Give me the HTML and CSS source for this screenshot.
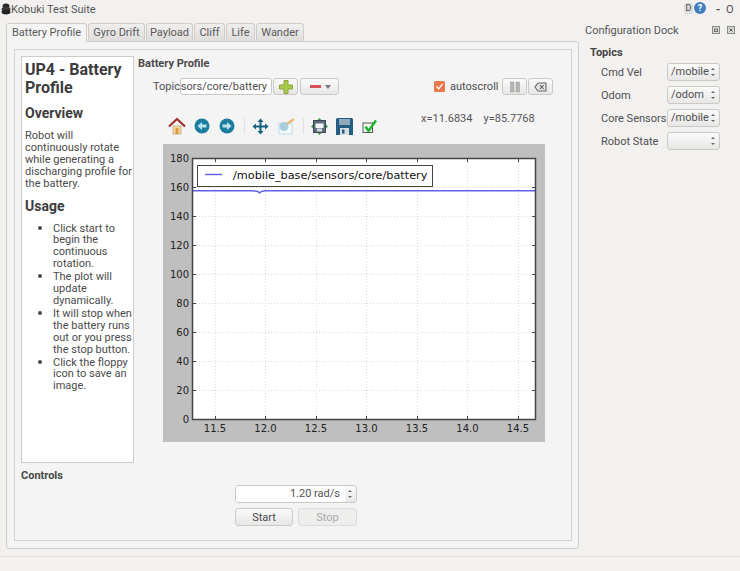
FILE: index.html
```html
<!DOCTYPE html>
<html lang="en">
<head>
    <meta charset="UTF-8">
    <title>Kobuki Test Suite</title>
    <link rel="stylesheet" href="styles.css">
</head>
<body>
<div class="window">
    <div class="titlebar">
        <svg class="app-icon" width="10" height="12" viewBox="0 0 10 12">
            <ellipse cx="5" cy="3" rx="3.5" ry="2.5" fill="#2b2b2b"/>
            <ellipse cx="5" cy="6" rx="4.5" ry="2" fill="#3a3a3a"/>
            <ellipse cx="5" cy="9" rx="4.5" ry="2.4" fill="#222"/>
        </svg>
        <span class="app-title">Kobuki Test Suite</span>
        <span class="title-d">D</span>
        <span class="title-help">?</span>
        <span class="title-min">-</span>
        <span class="title-o">O</span>
    </div>

    <div class="content">
        <div class="main">
            <div class="tabs">
                <div class="tab active">Battery Profile</div>
                <div class="tab tab-gyro">Gyro Drift</div>
                <div class="tab tab-payload">Payload</div>
                <div class="tab tab-cliff">Cliff</div>
                <div class="tab tab-life">Life</div>
                <div class="tab tab-wander">Wander</div>
            </div>
            <div class="pane">
                <div class="group">
                    <div class="upper">
                        <div class="doc">
                            <h1>UP4 - Battery Profile</h1>
                            <h2>Overview</h2>
                            <p>Robot will continuously rotate while generating a discharging profile for the battery.</p>
                            <h2 class="usage">Usage</h2>
                            <ul>
                                <li>Click start to begin the continuous rotation.</li>
                                <li>The plot will update dynamically.</li>
                                <li>It will stop when the battery runs out or you press the stop button.</li>
                                <li>Click the floppy icon to save an image.</li>
                            </ul>
                        </div>

                        <div class="profile">
                            <div class="section-title">Battery Profile</div>
                            <div class="topic-row">
                                <span class="topic-label">Topic</span>
                                <div class="topic-input"><span>/mobile_base/sensors/core/battery</span></div>
                                <div class="btn btn-add">
                                    <svg width="16" height="16" viewBox="0 0 16 16">
                                        <path d="M6 1.5h4v4.500h4.500v4H10v4.500H6V10H1.500V6H6z" fill="#a9c94e" stroke="#8aa63a"/>
                                    </svg>
                                </div>
                                <div class="btn btn-remove">
                                    <span class="minus"></span>
                                    <span class="caret"></span>
                                </div>
                                <div class="auto-box">
                                    <svg width="11" height="11" viewBox="0 0 11 11">
                                        <rect width="11" height="11" rx="1.500" fill="#e8774a"/>
                                        <path d="M2.500 5.500l2.200 2.300 4-5" fill="none" stroke="#fff" stroke-width="1.300"/>
                                    </svg>
                                    <span>autoscroll</span>
                                </div>
                                <div class="btn btn-small">
                                    <svg width="12" height="12" viewBox="0 0 12 12">
                                        <rect x="1.500" y="1" width="3.500" height="10" fill="#b5b5b3" stroke="#9a9a98" stroke-width=".5"/>
                                        <rect x="7" y="1" width="3.500" height="10" fill="#b5b5b3" stroke="#9a9a98" stroke-width=".5"/>
                                    </svg>
                                </div>
                                <div class="btn btn-small">
                                    <svg width="13" height="10" viewBox="0 0 13 10">
                                        <path d="M4 1h8v8H4L1 5z" fill="#e4e4e2" stroke="#666" stroke-width="1.100"/>
                                        <path d="M6 3.200l3.600 3.600M9.600 3.200L6 6.800" stroke="#666" stroke-width="1.100"/>
                                    </svg>
                                </div>
                            </div>

                            <div class="toolbar">
                                <svg class="tool" width="18" height="18" viewBox="0 0 18 18">
                                    <path d="M5 9h8v8H5z" fill="#f3d9a8" stroke="#b99b6a" stroke-width=".7"/>
                                    <path d="M7.500 11h3v6h-3z" fill="#e39a35"/>
                                    <path d="M1 9.500L9 2l8 7.500" fill="none" stroke="#a0302e" stroke-width="2.200"/>
                                </svg>
                                <svg class="tool tool-back" width="16" height="16" viewBox="0 0 16 16">
                                    <circle cx="8" cy="8" r="7.500" fill="#1c7e9e"/>
                                    <path d="M3.500 8L8 4v2.500h4.500v3H8V12z" fill="#bfe3ee"/>
                                </svg>
                                <svg class="tool tool-next" width="16" height="16" viewBox="0 0 16 16">
                                    <circle cx="8" cy="8" r="7.500" fill="#1c7e9e"/>
                                    <path d="M12.500 8L8 4v2.500H3.500v3H8V12z" fill="#bfe3ee"/>
                                </svg>
                                <span class="tool-sep"></span>
                                <svg class="tool" width="17" height="17" viewBox="0 0 17 17">
                                    <path d="M8.500 0.500l3 3.500H9.500v3.500H13v-2l3.500 3-3.500 3v-2H9.500V13h2l-3 3.500-3-3.500h2V9.500H4v2L.5 8.500 4 5.500v2h3.500V4h-2z" fill="#14607f"/>
                                </svg>
                                <svg class="tool tool-zoom" width="18" height="17" viewBox="0 0 18 17">
                                    <rect x="2" y="5" width="13" height="11" fill="#f4fafc" stroke="#bfdbe6"/>
                                    <circle cx="7" cy="8.500" r="4.500" fill="#a9cedb"/>
                                    <path d="M10 6l7-5" stroke="#eab777" stroke-width="2.500"/>
                                </svg>
                                <span class="tool-sep tool-sep2"></span>
                                <svg class="tool" width="17" height="17" viewBox="0 0 17 17">
                                    <rect x="2.500" y="2.500" width="12" height="12" fill="#5d6d7d" stroke="#3d4853"/>
                                    <rect x="4.500" y="5.500" width="8" height="4.500" fill="#f6f6f6"/>
                                    <rect x="6" y="10.500" width="5" height="3" fill="#d5dade"/>
                                    <path d="M8.500 0l2 2h-4zM8.500 17l2-2h-4zM0 8.500l2 2v-4zM17 8.500l-2 2v-4z" fill="#35a645"/>
                                </svg>
                                <svg class="tool tool-save" width="17" height="17" viewBox="0 0 17 17">
                                    <path d="M0 1.500A1.500 1.500 0 0 1 1.500 0H15.500A1.500 1.500 0 0 1 17 1.500V17H0z" fill="#235d82"/>
                                    <rect x="3" y="1" width="11" height="6" fill="#8fa9bb"/>
                                    <rect x="4" y="10" width="9" height="7" fill="#d7dee3"/>
                                    <rect x="6" y="11.500" width="2.500" height="4" fill="#235d82"/>
                                </svg>
                                <svg class="tool tool-check" width="15" height="15" viewBox="0 0 15 15">
                                    <rect x="1" y="4" width="9.500" height="9.500" fill="#f4f4f4" stroke="#555"/>
                                    <path d="M3.500 7.500l3 4.500L14 1.500" fill="none" stroke="#18b52a" stroke-width="2.400"/>
                                </svg>
                                <span class="coords coord-x">x=11.6834</span>
                                <span class="coords coord-y">y=85.7768</span>
                            </div>

                            <svg class="plot" width="382" height="298" viewBox="0 0 382 298">
                                <rect width="382" height="298" fill="#bfbfbf"/>
                                <rect x="29.500" y="14.500" width="343" height="261" fill="#fff"/>
                                <path d="M52.500 15V275M102.500 15V275M153.500 15V275M203.500 15V275M254.500 15V275M304.500 15V275M355.500 15V275M30 246.500H372M30 217.500H372M30 188.500H372M30 159.500H372M30 130.500H372M30 101.500H372M30 72.500H372M30 43.500H372" stroke="#dadada" stroke-width="1" stroke-dasharray="1 2" fill="none"/>
                                <path d="M30 46.700H90L95 47.500L96.500 49L98.500 47.500L102 46.700H372" fill="none" stroke="#6060e4" stroke-width="1.400"/>
                                <rect x="29.500" y="14.500" width="343" height="261" fill="none" stroke="#444" stroke-width="1.500"/>
                                <path d="M52.500 272V275M102.500 272V275M153.500 272V275M203.500 272V275M254.500 272V275M304.500 272V275M355.500 272V275M52.500 15V18M102.500 15V18M153.500 15V18M203.500 15V18M254.500 15V18M304.500 15V18M355.500 15V18M30 246.500H33M30 217.500H33M30 188.500H33M30 159.500H33M30 130.500H33M30 101.500H33M30 72.500H33M30 43.500H33M369 246.500H372M369 217.500H372M369 188.500H372M369 159.500H372M369 130.500H372M369 101.500H372M369 72.500H372M369 43.500H372" stroke="#444" fill="none"/>
                                <g class="tick-y">
                                    <text x="26" y="18">180</text>
                                    <text x="26" y="47">160</text>
                                    <text x="26" y="76">140</text>
                                    <text x="26" y="105">120</text>
                                    <text x="26" y="134">100</text>
                                    <text x="26" y="163">80</text>
                                    <text x="26" y="192">60</text>
                                    <text x="26" y="221">40</text>
                                    <text x="26" y="250">20</text>
                                    <text x="26" y="279">0</text>
                                </g>
                                <g class="tick-x">
                                    <text x="52" y="288">11.5</text>
                                    <text x="102.500" y="288">12.0</text>
                                    <text x="153" y="288">12.5</text>
                                    <text x="203.500" y="288">13.0</text>
                                    <text x="254" y="288">13.5</text>
                                    <text x="304.500" y="288">14.0</text>
                                    <text x="355" y="288">14.5</text>
                                </g>
                                <rect x="34.500" y="21.500" width="235" height="21" fill="#fff" stroke="#444"/>
                                <path d="M42 30.500H59" stroke="#6060e4" stroke-width="1.400"/>
                                <text class="legend" x="70" y="35">/mobile_base/sensors/core/battery</text>
                            </svg>
                        </div>
                    </div>

                    <div class="section-title controls-title">Controls</div>
                    <div class="controls">
                        <div class="spin">
                            <div class="spin-value">1.20 rad/s</div>
                            <div class="spin-arrows"><i class="up"></i><i class="down"></i></div>
                        </div>
                        <div class="control-buttons">
                            <div class="btn btn-start">Start</div>
                            <div class="btn btn-stop">Stop</div>
                        </div>
                    </div>
                </div>
            </div>
        </div>

        <div class="dock">
            <div class="dock-head">
                <span>Configuration Dock</span>
                <svg class="dock-icon" width="8" height="8" viewBox="0 0 8 8">
                    <rect x=".5" y=".5" width="7" height="7" fill="#dcdbd9" stroke="#8a8a88"/>
                    <rect x="2.500" y="3" width="3" height="2.500" fill="none" stroke="#6a6a68"/>
                </svg>
                <svg class="dock-icon" width="8" height="8" viewBox="0 0 8 8">
                    <rect x=".5" y=".5" width="7" height="7" fill="#dcdbd9" stroke="#8a8a88"/>
                    <path d="M2.500 2.500l3 3M5.500 2.500l-3 3" stroke="#555"/>
                </svg>
            </div>
            <div class="section-title dock-topics">Topics</div>
            <div class="dock-form">
                <div class="dock-row"><label>Cmd Vel</label><div class="combo">/mobile<i class="up"></i><i class="down"></i></div></div>
                <div class="dock-row"><label>Odom</label><div class="combo">/odom<i class="up"></i><i class="down"></i></div></div>
                <div class="dock-row"><label>Core Sensors</label><div class="combo">/mobile<i class="up"></i><i class="down"></i></div></div>
                <div class="dock-row"><label>Robot State</label><div class="combo"><i class="up"></i><i class="down"></i></div></div>
            </div>
        </div>
    </div>

    <div class="statusbar"></div>
</div>
</body>
</html>
```

FILE: styles.css
```css
* {
    box-sizing: border-box;
}
html, body {
    margin: 0;
    padding: 0;
}
body {
    font-family: Roboto, "Noto Sans", sans-serif;
    font-size: 11px;
    color: #4f4f4f;
    background-color: #f2f1f0;
}
.window {
    width: 740px;
    height: 571px;
    display: flex;
    flex-direction: column;
    overflow: hidden;
}

/* title bar */
.titlebar {
    height: 23px;
    padding: 3px 0 0 1px;
    display: flex;
    align-items: flex-start;
    line-height: 13px;
}
.app-icon {
    flex: none;
}
.app-title {
    flex: 1;
    color: #555;
}
.title-d {
    width: 9px;
    height: 11px;
    margin-right: 1px;
    background-color: #ddd;
    font-size: 9px;
    line-height: 11px;
    text-align: center;
    border-radius: 2px;
}
.title-help {
    width: 12px;
    height: 12px;
    margin-top: -1px;
    border-radius: 50%;
    background-color: #3f7fc0;
    color: #fff;
    font-size: 9px;
    font-weight: bold;
    line-height: 12px;
    text-align: center;
}
.title-min {
    width: 6px;
    margin-left: 10px;
    font-weight: bold;
}
.title-o {
    width: 18px;
    padding-left: 4px;
}

.content {
    display: flex;
    height: 533px;
}
.main {
    width: 585px;
    padding-left: 6px;
    flex: none;
}

/* tabs */
.tabs {
    display: flex;
    height: 18px;
    position: relative;
    z-index: 1;
}
.tab {
    height: 18px;
    margin-right: 1px;
    padding-top: 2px;
    text-align: center;
    line-height: 14px;
    background: linear-gradient(#f0efee, #dedddb);
    border: 1px solid #cfcdca;
    border-bottom: none;
    border-radius: 3px 3px 0 0;
    color: #5a5a5a;
}
.tab.active {
    width: 81px;
    height: 19px;
    background: #f4f4f4;
}
.tab-gyro { width: 57px; }
.tab-payload { width: 47px; }
.tab-cliff { width: 31px; }
.tab-life { width: 29px; }
.tab-wander { width: 48px; }

.pane {
    width: 573px;
    height: 508px;
    padding: 7px;
    background-color: #f4f4f4;
    border: 1px solid #cfcdca;
    border-radius: 0 3px 3px 3px;
}
.group {
    width: 558px;
    height: 492px;
    padding: 6px;
    border: 1px solid #d4d2cf;
}
.upper {
    display: flex;
}

/* text panel */
.doc {
    width: 113px;
    height: 407px;
    padding: 4px 0 3px 3px;
    flex: none;
    background-color: #fff;
    border: 1px solid #cfcdca;
    line-height: 11.900px;
    color: #4a4a4a;
}
.doc h1 {
    margin: 0;
    font-size: 16px;
    line-height: 18px;
    font-weight: bold;
    color: #3c3c3c;
}
.doc h2 {
    margin: 8px 0 9px;
    font-size: 14px;
    line-height: 16px;
    font-weight: bold;
    color: #3c3c3c;
}
.doc .usage {
    margin: 8px 0 0;
}
.doc p {
    margin: 0;
}
.doc ul {
    margin: 8px 0 0;
    padding: 0 0 0 28px;
}
.doc li::marker {
    font-size: 14px;
}

/* plot side */
.profile {
    margin-left: 4px;
    flex: 1;
    position: relative;
}
.section-title {
    padding-top: 1px;
    font-weight: bold;
    color: #4a4a4a;
    line-height: 14px;
}
.topic-row {
    display: flex;
    align-items: center;
    height: 17px;
    margin-top: 7px;
}
.topic-label {
    width: 27px;
    margin-left: 15px;
}
.topic-input {
    width: 92px;
    height: 17px;
    padding: 0 4px;
    display: flex;
    justify-content: flex-end;
    overflow: hidden;
    background-color: #fff;
    border: 1px solid #c9c7c4;
    border-radius: 3px;
    white-space: nowrap;
    line-height: 15px;
}
.topic-input span {
    flex: none;
}
.btn {
    display: flex;
    align-items: center;
    justify-content: center;
    background: linear-gradient(#fafafa, #e8e7e6);
    border: 1px solid #cbc9c6;
    border-radius: 3px;
}
.btn-add {
    width: 25px;
    height: 17px;
    margin-left: 1px;
}
.btn-remove {
    width: 39px;
    height: 17px;
    margin-left: 2px;
}
.minus {
    width: 11px;
    height: 3px;
    margin-left: 2px;
    background-color: #d9505a;
}
.caret {
    margin-left: 4px;
    margin-top: 1px;
    border-left: 3px solid transparent;
    border-right: 3px solid transparent;
    border-top: 4px solid #777;
}
.auto-box {
    display: flex;
    align-items: center;
    margin-left: 95px;
    width: 68px;
}
.auto-box span {
    margin-left: 5px;
}
.btn-small {
    width: 25px;
    height: 17px;
    margin-right: 1px;
}

.toolbar {
    display: flex;
    align-items: center;
    height: 18px;
    margin-top: 22px;
    margin-left: 30px;
}
.tool {
    flex: none;
}
.tool-back { margin-left: 8px; }
.tool-next { margin-left: 9px; }
.tool-sep {
    width: 1px;
    height: 16px;
    margin: 0 7px 0 9px;
    background-color: #e2e1df;
}
.tool-zoom { margin-left: 8px; }
.tool-sep2 { margin: 0 7px 0 8px; }
.tool-save { margin-left: 8px; }
.tool-check { margin-left: 9px; }
.coords {
    align-self: flex-start;
    margin-top: -5px;
    color: #555;
    flex: none;
}
.coord-x { margin-left: 44px; }
.coord-y { margin-left: 11px; }

.plot {
    display: block;
    margin-top: 9px;
    margin-left: 25px;
    font-family: "DejaVu Sans", sans-serif;
}
.tick-y text {
    font-size: 10px;
    text-anchor: end;
    fill: #222;
}
.tick-x text {
    font-size: 10px;
    text-anchor: middle;
    fill: #222;
}
.legend {
    font-size: 11.250px;
    fill: #111;
}

/* controls */
.controls-title {
    margin-top: 5px;
}
.controls {
    margin-left: 214px;
    margin-top: 2px;
    width: 122px;
}
.spin {
    display: flex;
    height: 18px;
    background: linear-gradient(#fafafa, #e8e7e6);
    border: 1px solid #cbc9c6;
    border-radius: 3px;
}
.spin-value {
    width: 109px;
    padding-right: 5px;
    text-align: right;
    background-color: #fff;
    line-height: 16px;
    border-radius: 2px 0 0 2px;
}
.spin-arrows {
    flex: 1;
    position: relative;
}
.up, .down {
    position: absolute;
    right: 4px;
    border-left: 2px solid transparent;
    border-right: 2px solid transparent;
}
.up {
    top: 4px;
    border-bottom: 2px solid #666;
}
.down {
    bottom: 4px;
    border-top: 2px solid #666;
}
.control-buttons {
    display: flex;
    justify-content: space-between;
    margin-top: 5px;
}
.btn-start, .btn-stop {
    width: 58px;
    height: 18px;
    color: #4a4a4a;
}
.btn-stop {
    width: 59px;
    color: #aaa;
    background: #eeeeed;
    border-color: #dcdbd9;
}

/* dock */
.dock {
    flex: 1;
}
.dock-head {
    display: flex;
    align-items: center;
    height: 14px;
    color: #555;
}
.dock-head span {
    width: 127px;
}
.dock-icon {
    flex: none;
    margin-right: 7px;
}
.dock-topics {
    margin-top: 8px;
    margin-left: 5px;
    color: #444;
}
.dock-form {
    margin-top: 3px;
    margin-left: 16px;
}
.dock-row {
    display: flex;
    align-items: center;
    height: 18px;
    margin-bottom: 5px;
}
.dock-row label {
    width: 66px;
    flex: none;
    white-space: nowrap;
}
.combo {
    position: relative;
    width: 53px;
    height: 18px;
    padding-left: 3px;
    line-height: 16px;
    background: linear-gradient(#fafafa, #e8e7e6);
    border: 1px solid #cbc9c6;
    border-radius: 3px;
    white-space: nowrap;
}

.statusbar {
    height: 15px;
    border-top: 1px solid #e2e1df;
}
```
